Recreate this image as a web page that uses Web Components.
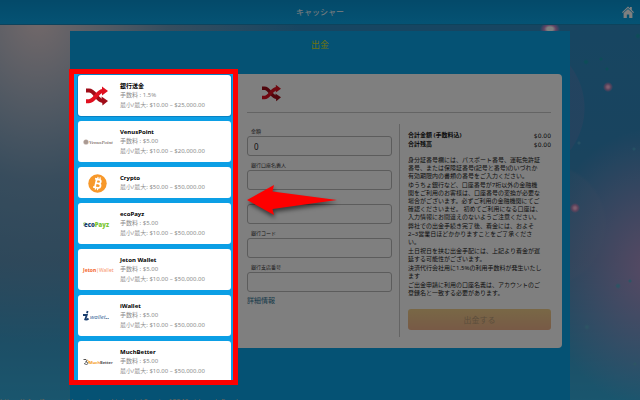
<!DOCTYPE html>
<html lang="ja">
<head>
<meta charset="utf-8">
<title>キャッシャー</title>
<style>
  html, body { height: 100%; margin: 0; }
  body { overflow: hidden; font-family: "Noto Sans", "Noto Sans CJK JP", sans-serif; font-size: 6px; color: #111; }
</style>
</head>
<body>
<cashier-page></cashier-page>

<template id="t-page">
  <style>
    :host {
      display: flex; flex-direction: column; height: 100vh; position: relative; overflow: hidden;
      background:
        radial-gradient(circle at 608px 87px, #fbd 0 1px, rgba(255,130,180,.6) 3px, transparent 5px),
        radial-gradient(circle at 575px 208px, #fbd 0 1px, rgba(255,130,180,.6) 3px, transparent 5px),
        radial-gradient(ellipse at 550px 29px, #fff 0 3px, rgba(255,130,200,.7) 6px, transparent 10px),
        radial-gradient(circle at 586px 62px, #1b9ab0 0 1px, transparent 3px),
        radial-gradient(circle at 601px 59px, #1b9ab0 0 1px, transparent 2px),
        radial-gradient(circle at 607px 69px, #1b9ab0 0 1px, transparent 2px),
        radial-gradient(circle at 638px 36px, #1b9ab0 0 1px, transparent 3px),
        radial-gradient(circle at 579px 143px, #4aa0c8 0 1px, transparent 2px),
        radial-gradient(circle at 634px 149px, #4aa0c8 0 1px, transparent 2px),
        radial-gradient(circle at 618px 286px, #5aa8c8 0 1px, transparent 3px),
        radial-gradient(circle at 630px 281px, #5aa8c8 0 1px, transparent 2px),
        radial-gradient(circle at 587px 327px, #5aa8c8 0 1px, transparent 3px),
        radial-gradient(circle at 635px 364px, #5aa8c8 0 1px, transparent 2px),
        radial-gradient(circle at 515px 108px, rgba(150,130,190,.22) 69px, transparent 70px),
        radial-gradient(circle at 545px 225px, rgba(130,150,190,.18) 59px, transparent 62px),
        radial-gradient(ellipse 110px 140px at 102% 67%, rgba(205,150,205,.8), transparent),
        radial-gradient(ellipse 260px 330px at 6% 4%, #e6d2d4, rgba(150,165,185,.6) 50%, transparent),
        linear-gradient(to bottom, #2e8cc4 0%, #3288be 35%, #4488b4 65%, #34acdc 100%);
    }
    main { flex: 1; min-height: 0; padding-top: 6px; display: flex; justify-content: center; }
    .panel { box-sizing: border-box; width: 100%; max-width: 500px; background: #0aa4e8; padding: 0 8px 0 4px; }
    h1 { margin: 0; padding-left: 4px; height: 43px; line-height: 28px; font-size: 9px; font-weight: 400; color: #dce414; text-align: center; }
    .columns { display: grid; grid-template-columns: 159px minmax(0, 1fr); align-items: start; }
    .spot { position: relative; z-index: 1; }
    callout-arrow { position: absolute; left: calc(100% + 13px); top: 107px; }
    .status { position: absolute; left: 0; bottom: -6px; font-size: 7px; line-height: 8px; color: #d8ccb4; white-space: nowrap; }
  </style>
  <cashier-header>キャッシャー</cashier-header>
  <main>
    <section class="panel">
      <h1>出金</h1>
      <div class="columns">
        <div class="spot">
          <method-list>
            <method-card name="銀行送金" fee="1.5%" range="$10.00 – $25,000.00" selected><brand-logo kind="transfer"></brand-logo></method-card>
            <method-card name="VenusPoint" fee="$5.00" range="$10.00 – $20,000.00"><brand-logo kind="venus"></brand-logo></method-card>
            <method-card name="Crypto" range="$50.00 – $50,000.00"><brand-logo kind="crypto"></brand-logo></method-card>
            <method-card name="ecoPayz" fee="$5.00" range="$10.00 – $50,000.00"><brand-logo kind="eco"></brand-logo></method-card>
            <method-card name="Jeton Wallet" fee="$5.00" range="$10.00 – $50,000.00"><brand-logo kind="jeton"></brand-logo></method-card>
            <method-card name="iWallet" fee="$5.00" range="$10.00 – $50,000.00"><brand-logo kind="iwallet"></brand-logo></method-card>
            <method-card name="MuchBetter" fee="$5.00" range="$10.00 – $50,000.00"><brand-logo kind="much"></brand-logo></method-card>
          </method-list>
          <callout-arrow></callout-arrow>
        </div>
        <withdraw-form></withdraw-form>
      </div>
    </section>
  </main>
  <div class="status">https://s1.adform.net/serving/cookie/match?party=1224&amp;uid=undefined</div>
</template>

<template id="t-header">
  <style>
    :host { display: grid; grid-template-columns: 1fr auto 1fr; align-items: center; height: 25px; box-sizing: border-box;
      padding: 0 6px; background: linear-gradient(#0894d4, #0aa6e8); border-bottom: 1px solid #1a86b8; color: #fff; font-size: 8px; line-height: 12px; }
    span { grid-column: 2; }
    a { justify-self: end; display: block; height: 12px; color: inherit; }
    svg { display: block; }
  </style>
  <span><slot></slot></span>
  <a href="#" aria-label="ホーム"><svg width="12" height="12" viewBox="0 0 12 12" fill="currentColor"><path d="M6 .4 8 2.3V1h1.8v3L12 6.2l-.8.8L6 2.1.8 7 0 6.2z"/><path d="M6 3 10.4 7.1V12H7.2V8.4H4.8V12H1.6V7.1z"/></svg></a>
</template>

<template id="t-list">
  <style>
    :host { display: block; box-shadow: 0 0 0 5px #fe0000, 0 0 0 9999px rgba(0,0,0,.5); }
    div { box-sizing: border-box; height: calc(100vh - 94px); overflow: hidden; display: flex; flex-direction: column; gap: 5px; padding: 1px 2px 0 4px; background: #0c9fe5; }
  </style>
  <div><slot></slot></div>
</template>

<template id="t-card">
  <style>
    :host { flex: none; display: grid; grid-template-columns: 38px 1fr; column-gap: 4px; align-items: center; box-sizing: border-box;
      padding: 3px 0 2px; background: #fff; border-radius: 3px; color: #8c8c8c; line-height: 9px; white-space: nowrap; }
    :host([selected]) { box-shadow: 0 0 0 1px #0783c4; }
    .logo { display: flex; justify-content: center; }
    .text { padding: 4px 0; }
    p { margin: 0; }
    .name { color: #000; font-weight: 700; }
    .fee { padding-bottom: 1px; }
  </style>
  <div class="logo"><slot></slot></div>
  <div class="text"><p class="name"></p><p class="fee"></p><p class="range"></p></div>
</template>

<template id="t-form">
  <style>
    :host { display: block; box-sizing: border-box; background: #fff; border-radius: 0 4px 4px 0; padding: 0 11px 11px 14px; }
    header { height: 38px; border-bottom: 1px solid #c8c8c8; padding-left: 15px; display: flex; align-items: center; }
    .body { display: grid; grid-template-columns: 1fr 1fr; margin-top: 11px; }
    .fields { display: flex; flex-direction: column; padding: 2px 7px 0 0; }
    aside { border-left: 1px solid #c8c8c8; padding: 7px 0; padding-left: 8px; }
    dl { display: grid; grid-template-columns: 1fr auto; margin: 0 0 7px; line-height: 9px; }
    dt { font-weight: 700; }
    dd { margin: 0; font-size: 6px; font-family: "DejaVu Sans", sans-serif; }
    p { margin: 0 0 1px; line-height: 8px; color: #222; white-space: nowrap; }
    button { display: block; width: 100%; height: 21px; margin-top: 12px; padding: 0; border: 0; border-radius: 3px; font: inherit; font-size: 8px; color: #b99c78; background: linear-gradient(#f2d08c, #f0b48c); }
    a { color: #2f7594; text-decoration: none; font-size: 7px; line-height: 10px; align-self: flex-start; }
  </style>
  <header><brand-logo kind="transfer-small"></brand-logo></header>
  <div class="body">
    <div class="fields">
      <text-field label="金額" value="0"></text-field>
      <text-field label="銀行口座名義人"></text-field>
      <text-field label="銀行口座番号" covered></text-field>
      <text-field label="銀行コード"></text-field>
      <text-field label="銀行支店番号"></text-field>
      <a href="#">詳細情報</a>
    </div>
    <aside>
      <dl><dt>合計金額 (手数料込)</dt><dd>$0.00</dd><dt>合計残高</dt><dd>$0.00</dd></dl>
      <p>身分証番号欄には、パスポート番号、運転免許証<br>番号、または保険証番号(記号と番号)のいづれか<br>有効期限内の書類の番号をご入力ください。</p>
      <p>ゆうちょ銀行など、口座番号が7桁以外の金融機<br>関をご利用のお客様は、口座番号の変換が必要な<br>場合がございます。必ずご利用の金融機関にてご<br>確認くださいませ。 初めてご利用になる口座は、<br>入力情報にお間違えのないようご注意ください。</p>
      <p>弊社での出金手続き完了後、着金には、およそ<br>2~3営業日ほどかかりますことをご了承くださ<br>い。</p>
      <p>土日祝日を挟む出金手配には、上記より着金が遅<br>延する可能性がございます。</p>
      <p>決済代行会社用に1.5%の利用手数料が発生いたし<br>ます</p>
      <p>ご出金申請に利用の口座名義は、アカウントのご<br>登録名と一致する必要があります。</p>
      <button type="button" disabled>出金する</button>
    </aside>
  </div>
</template>

<template id="t-field">
  <style>
    :host { display: flex; flex-direction: column; height: 34px; }
    label { font-size: 5px; line-height: 10px; height: 10px; padding-left: 4px; color: #333; }
    input { box-sizing: border-box; width: 100%; height: 20px; border: 1px solid #b8b8b8; border-radius: 3px; background: transparent; padding: 0 6px; font: inherit; font-size: 8px; color: #222; }
  </style>
  <label for="f"></label><input id="f" type="text">
</template>

<template id="t-arrow">
  <style>
    :host { display: block; pointer-events: none; }
    svg { display: block; overflow: visible; filter: drop-shadow(1px 3px 2px rgba(0,0,0,.55)); }
  </style>
  <svg width="92" height="38" viewBox="0 0 92 38" aria-hidden="true"><path fill="#fe0000" d="M1 19 28 4 26.500 10.500 91 19 26.500 28 28 34z"/></svg>
</template>

<script>
  const stamp = (host, id) => {
    const root = host.attachShadow({ mode: 'open' });
    root.append(document.getElementById(id).content.cloneNode(true));
    return root;
  };

  const shuffle = (w, h) => `<svg width="${w}" height="${h}" viewBox="0 0 22 18" aria-hidden="true">
    <path d="M0 3.600H3C9 3.600 11 14 17 14" fill="none" stroke="#a00c18" stroke-width="4"/>
    <path d="M15.500 9.500 22 14 16.500 18.500z" fill="#a00c18"/>
    <path d="M0 14.200H3C9 14.200 11 4 17 4" fill="none" stroke="#e01020" stroke-width="4"/>
    <path d="M16 -.5 22 4 16 8.500z" fill="#e01020"/></svg>`;

  const logos = {
    'transfer': shuffle(22, 18),
    'transfer-small': shuffle(19, 16),
    'venus': `<svg width="28" height="8" viewBox="0 0 28 8"><circle cx="3" cy="4" r="2.600" fill="#b8a8a0"/><circle cx="3" cy="4" r="1.300" fill="none" stroke="#8c7c76" stroke-width=".5"/>
      <text x="6" y="6" font-family="Liberation Serif, serif" font-style="italic" font-weight="700" font-size="5" fill="#8a7d78">VenusPoint</text></svg>`,
    'crypto': `<svg width="19" height="19" viewBox="0 0 19 19" aria-hidden="true"><circle cx="9.500" cy="9.500" r="9.200" fill="#f7982a"/>
      <g transform="rotate(13 9.500 9.500)" fill="none" stroke="#fff" stroke-width="1.700"><path d="M6 5.300H10.300A2 2 0 0 1 10.300 9.300H7.600M7.600 9.300H10.800A2.200 2.200 0 0 1 10.800 13.700H6M7.800 5V14"/><path d="M8.600 3V5.400M10.900 3V5.400M8.600 13.600V16M10.900 13.600V16" stroke-width="1.200"/></g></svg>`,
    'eco': `<svg width="28" height="9" viewBox="0 0 28 9"><path d="M0 3.500 2.500 2.500M0 5 2 5" stroke="#7ac043" stroke-width=".8"/><text x="1" y="7" font-family="Noto Sans, sans-serif" font-weight="900" font-size="6" fill="#17406e">eco<tspan fill="#7ac532">Payz</tspan></text></svg>`,
    'jeton': `<svg width="28" height="8" viewBox="0 0 28 8"><text x="0" y="6" font-family="Noto Sans, sans-serif" font-weight="700" font-size="5" fill="#f4642a">Jeton<tspan font-weight="400" fill="#f79468">|Wallet</tspan></text></svg>`,
    'iwallet': `<svg width="28" height="10" viewBox="0 0 28 10"><path d="M0 4H3.800L2.200 8.500Q4 9 5.500 7.500M4.600 0 4 2.200" fill="none" stroke="#173c6c" stroke-width="1.800"/>
      <text x="7" y="8" font-family="Noto Sans, sans-serif" font-style="italic" font-size="6" fill="#3c6c9c">wallet<tspan font-weight="700" fill="#173c6c">..</tspan></text></svg>`,
    'much': `<svg width="28" height="8" viewBox="0 0 28 8"><path d="M.5 1.500H3A1.500 1.500 0 0 1 3 4M2 4H4A1.300 1.300 0 0 1 3.500 6.500L1 5.500" fill="none" stroke="#444" stroke-width=".9"/><path d="M4 2A2 2 0 0 1 5.500 5" fill="none" stroke="#f59a23" stroke-width=".8"/>
      <text x="6" y="6" font-family="Noto Sans, sans-serif" font-weight="700" font-size="4" fill="#f59a23">Much<tspan fill="#555">Better</tspan></text></svg>`
  };

  customElements.define('brand-logo', class extends HTMLElement {
    constructor() {
      super();
      this.attachShadow({ mode: 'open' });
    }
    connectedCallback() {
      this.shadowRoot.innerHTML = `<style>:host{display:block} svg{display:block;overflow:visible}</style>${logos[this.getAttribute('kind')]}`;
    }
  });

  customElements.define('method-card', class extends HTMLElement {
    connectedCallback() {
      if (this.shadowRoot) return;
      const root = stamp(this, 't-card');
      const fee = this.getAttribute('fee');
      root.querySelector('.name').textContent = this.getAttribute('name');
      if (fee) root.querySelector('.fee').textContent = `手数料 : ${fee}`;
      else root.querySelector('.fee').remove();
      root.querySelector('.range').textContent = `最小/最大: ${this.getAttribute('range')}`;
    }
  });

  customElements.define('text-field', class extends HTMLElement {
    connectedCallback() {
      if (this.shadowRoot) return;
      const root = stamp(this, 't-field');
      const input = root.querySelector('input');
      if (this.hasAttribute('covered')) input.setAttribute('aria-label', this.getAttribute('label'));
      else root.querySelector('label').textContent = this.getAttribute('label');
      input.value = this.getAttribute('value') || '';
    }
  });

  for (const [tag, id] of [['callout-arrow', 't-arrow'], ['method-list', 't-list'], ['withdraw-form', 't-form'], ['cashier-header', 't-header'], ['cashier-page', 't-page']]) {
    customElements.define(tag, class extends HTMLElement {
      constructor() { super(); stamp(this, id); }
    });
  }
</script>
</body>
</html>
